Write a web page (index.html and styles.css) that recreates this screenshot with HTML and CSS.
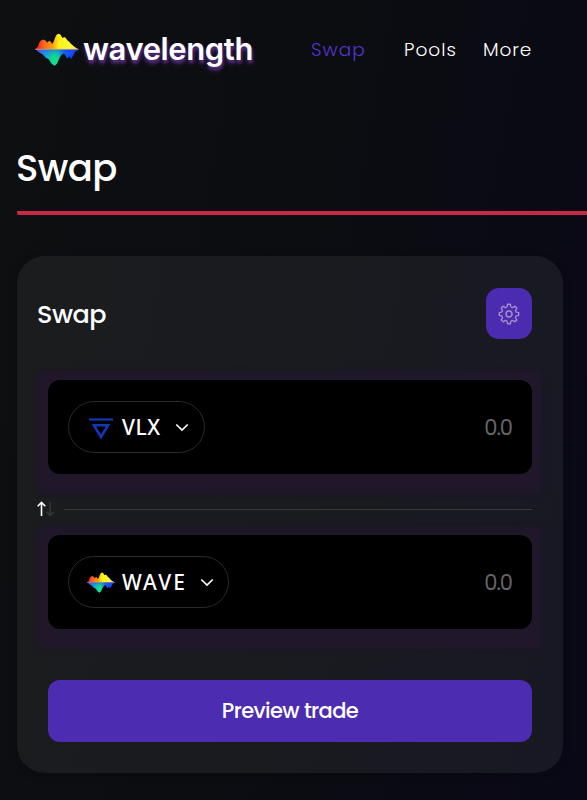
FILE: index.html
```html
<!DOCTYPE html>
<html lang="en">
<head>
<meta charset="utf-8">
<title>Wavelength</title>
<link rel="stylesheet" href="styles.css">
</head>
<body>
<svg class="defs" width="0" height="0" aria-hidden="true">
  <defs>
    <linearGradient id="warm"><stop offset="0" stop-color="#f20d20"/><stop offset=".22" stop-color="#ff6a1c"/><stop offset=".4" stop-color="#ff9d10"/><stop offset=".55" stop-color="#fff215"/><stop offset=".8" stop-color="#fff83a"/><stop offset="1" stop-color="#ffd84a"/></linearGradient>
    <linearGradient id="cool"><stop offset="0" stop-color="#a64bb0"/><stop offset=".2" stop-color="#1298f2"/><stop offset=".42" stop-color="#12e67c"/><stop offset=".53" stop-color="#12cfa0"/><stop offset=".66" stop-color="#0b50ff"/><stop offset="1" stop-color="#1010ff"/></linearGradient>
    <linearGradient id="tint" x1="0" y1="0" x2="0" y2="1"><stop offset="0" stop-color="#284bff" stop-opacity=".6"/><stop offset=".6" stop-color="#20c0c0" stop-opacity="0"/></linearGradient>
    <symbol id="wave" viewBox="0 0 45 33">
      <path fill="url(#warm)" d="M0 16.5 3 13.5 4.5 9 6 7.2 8.500 6.200 11 7.600 12.500 9.500 14.500 7.500 16 8.500 17.500 11 19 8.500 20.500 4.500 22 1.500 24 .4 26 1.200 28 4.800 30 3.800 31.500 4.700 33 7 35 8.600 37 11 40 13.500 44.500 16.500Z"/>
      <path fill="url(#cool)" d="M1 16.500H44.500L41 18.800 39 23 37 26.200 35 23.500 33 25.800 31 22.500 29.500 20.600 27 22 25 25.500 22.500 31 20 33 17 31 14 26.500 11 25 8 21.700 4 19Z"/>
      <path fill="url(#tint)" d="M1 16.500H44.500L41 18.800 39 23 37 26.200 35 23.500 33 25.800 31 22.500 29.500 20.600 27 22 25 25.500 22.500 31 20 33 17 31 14 26.500 11 25 8 21.700 4 19Z"/>
      <path stroke="#c9bda0" stroke-width=".7" d="M0 16.300H44.500"/>
    </symbol>
  </defs>
</svg>
<header class="header">
  <a class="brand"><svg class="brand-mark"><use href="#wave"/></svg><span class="brand-name">wavelength</span></a>
  <nav class="nav"><a class="nav-swap active">Swap</a><a class="nav-pools">Pools</a><a class="nav-more">More</a></nav>
</header>
<main>
  <h1>Swap</h1>
  <section class="card">
    <div class="card-head">
      <h2>Swap</h2>
      <button class="settings" aria-label="Settings">
        <svg width="22" height="22" viewBox="-11 -11 22 22" fill="none" stroke="#a58fc8" stroke-width="1.400" stroke-linejoin="round"><circle r="3"/><path d="M-1.300-9.700H1.300L1.900-7.600A1.500 1.500 0 0 0 4.030-6.720L5.940-7.780 7.780-5.940 6.720-4.030A1.500 1.500 0 0 0 7.600-1.900L9.700-1.300V1.300L7.600 1.900A1.500 1.500 0 0 0 6.720 4.030L7.780 5.940 5.940 7.780 4.030 6.720A1.500 1.500 0 0 0 1.900 7.600L1.300 9.700H-1.300L-1.900 7.600A1.500 1.500 0 0 0-4.030 6.720L-5.940 7.780-7.780 5.940-6.720 4.030A1.500 1.500 0 0 0-7.600 1.900L-9.700 1.300V-1.300L-7.600-1.900A1.500 1.500 0 0 0-6.720-4.030L-7.780-5.940-5.940-7.780-4.030-6.720A1.500 1.500 0 0 0-1.900-7.600Z"/></svg>
      </button>
    </div>
    <div class="field">
      <button class="token">
        <svg class="vlx" width="24" height="22" viewBox="0 0 24 22" fill="none" stroke="#1237b8"><path stroke-width="2.200" d="M0 1.500H24"/><path stroke-width="2.600" d="M5 7.300H19L12 18.900Z"/></svg>
        <span class="sym-vlx">VLX</span>
        <svg class="chevron" width="14" height="9" viewBox="0 0 14 9"><path d="M1.300 1.500 7 7 12.700 1.500"/></svg>
      </button>
      <span class="amount">0.0</span>
    </div>
    <div class="divider">
      <svg width="18" height="16" viewBox="0 0 18 16" fill="none"><path stroke="#fff" stroke-width="1.600" d="M4.500 15V1.700M.7 5.200 4.500 1.400 8.300 5.200"/><path stroke="#38393d" stroke-width="1.300" d="M13.200 1V14.300M9.500 10.800 13.200 14.500 17 10.800"/></svg>
      <hr>
    </div>
    <div class="field">
      <button class="token token-wave">
        <svg class="wave-small"><use href="#wave"/></svg>
        <span class="sym-wave">WAVE</span>
        <svg class="chevron" width="14" height="9" viewBox="0 0 14 9"><path d="M1.300 1.500 7 7 12.700 1.500"/></svg>
      </button>
      <span class="amount">0.0</span>
    </div>
    <button class="preview"><span>Preview trade</span></button>
  </section>
</main>
</body>
</html>
```
FILE: styles.css
```css
* { box-sizing: border-box; }
body {
  margin: 0;
  min-height: 800px;
  overflow: hidden;
  color: #fff;
  font-family: Poppins, Inter, "Liberation Sans", sans-serif;
  background: linear-gradient(100deg, #0e0f11 0%, #0c0d11 45%, #090816 100%);
}
.defs { display: block; height: 0; }
button { border: 0; padding: 0; color: inherit; font: inherit; }
.header { display: flex; align-items: center; height: 98px; padding-left: 35px; }
.brand { display: flex; align-items: center; width: 276px; }
.brand-mark { width: 44px; height: 33px; flex: none; }
.brand-name {
  margin-left: 4px;
  font-family: Inter, sans-serif;
  font-size: 31px;
  font-weight: 600;
  line-height: 40px;
  letter-spacing: -0.4px;
  text-shadow: 1px 3px 3px #593080, 0 4px 5px #351b50;
}
.nav { display: flex; padding-top: 1px; font-size: 18.5px; font-weight: 300; line-height: 28px; }
.nav a { white-space: nowrap; }
.nav-swap { width: 93px; letter-spacing: 1px; }
.nav-pools { width: 79px; letter-spacing: 1px; }
.nav-more { letter-spacing: .9px; }
.active { color: #5735d6; }
main { padding-left: 17px; }
h1, h2 { margin: 0; font-weight: 500; }
h1 {
  height: 117px;
  padding-top: 44px;
  border-bottom: 4px solid #c92848;
  border-bottom-left-radius: 2px;
  font-size: 37px;
  line-height: 52px;
  letter-spacing: -0.6px;
  text-indent: -1px;
}
.card {
  isolation: isolate;
  width: 546px;
  height: 517px;
  margin-top: 41px;
  padding: 32px 31px 31px;
  border-radius: 28px;
  background: linear-gradient(100deg, #1b1c1e 0%, #1a1b1f 48%, #181824 100%);
  box-shadow: 0 2px 8px rgba(0, 0, 0, .2);
}
.card-head { display: flex; justify-content: space-between; height: 51px; margin-left: -11px; margin-bottom: 41px; }
h2 { font-size: 25.5px; line-height: 52px; letter-spacing: -.5px; }
.settings { display: grid; place-items: center; width: 46px; height: 51px; border-radius: 13px; background: #4b2bb0; }
.field {
  position: relative;
  display: flex;
  align-items: center;
  justify-content: space-between;
  height: 94px;
  padding: 0 20px;
  border-radius: 12px;
  background: #000;
}
.field::before {
  content: "";
  position: absolute;
  z-index: -1;
  inset: -7px -8px -18px;
  border-radius: 2px;
  background: #20172a;
  box-shadow: 0 0 4px 2px #20172a;
}
.token {
  display: flex;
  align-items: center;
  width: 137px;
  height: 52px;
  padding-left: 20px;
  border: 1px solid #292929;
  border-radius: 26px;
  background: #000;
  font-family: "Noto Sans", sans-serif;
  font-size: 21px;
  font-weight: 500;
}
.token-wave { width: 161px; padding-left: 18px; }
.vlx { margin-top: 4px; }
.wave-small { width: 28px; height: 21px; }
.sym-vlx { width: 53px; margin-left: 9px; text-align: left; letter-spacing: .5px; }
.sym-wave { width: 78px; margin-left: 7px; text-align: left; letter-spacing: 2.2px; }
.chevron { flex: none; fill: none; stroke: #fff; stroke-width: 1.7; }
.amount { color: #666; font-size: 21px; letter-spacing: -1px; }
.divider { display: flex; align-items: center; height: 61px; margin-left: -11px; padding-top: 9px; }
.divider svg { flex: none; }
.divider hr { width: 468px; margin: 0 0 0 auto; border: 0; border-top: 1px solid #38393b; }
.preview {
  width: 100%;
  height: 62px;
  margin-top: 51px;
  padding-bottom: 2px;
  border-radius: 12px;
  background: #4c2cb1;
  font-size: 21px;
  font-weight: 500;
}
.preview span { letter-spacing: -.6px; }
```
